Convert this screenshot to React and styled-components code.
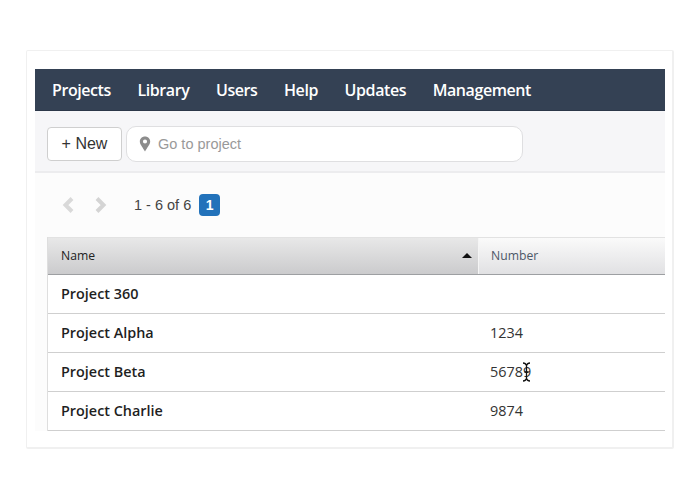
import React from "react";
import styled, { createGlobalStyle } from "styled-components";

const Global = createGlobalStyle`
  html, body { margin: 0; padding: 0; background: #fff; }
  body { width: 700px; height: 500px; overflow: hidden; font-family: "Open Sans", sans-serif; }
`;
const Page = styled.div`
  width: 700px; height: 500px; box-sizing: border-box; padding: 50px 26px 0;
`;
const Card = styled.div`
  width: 648px; height: 399px; box-sizing: border-box;
  border: 1px solid #f0f0f0; border-right-width: 2px; border-bottom-width: 2px; border-radius: 2px;
  padding: 18px 8px 0 8px; background: #fff;
`;
const Frame = styled.div`
  width: 630px; height: 362px; overflow: hidden; background: #fcfcfc;
`;
const Nav = styled.nav`
  height: 42px; box-sizing: border-box; background: #344154; border-bottom: 1px solid #2c3849;
  display: flex; align-items: center; padding: 0 0 0 17px; gap: 26.6px;
`;
const NavItem = styled.a`
  color: #fff; font: 600 16px/20px "Open Sans", sans-serif; letter-spacing: -0.42px;
`;
const Toolbar = styled.div`
  height: 62px; box-sizing: border-box; background: #f6f6f8; border-bottom: 2px solid #ececee;
  display: flex; align-items: flex-start; padding: 16px 0 0 12px; gap: 4px;
`;
const NewButton = styled.button`
  width: 75px; height: 34px; box-sizing: border-box; background: #fff; border: 1px solid #cfcfcf;
  border-radius: 4px; padding: 0; color: #333; font: 400 16px "Liberation Sans", Arial, sans-serif;
`;
const Search = styled.div`
  width: 397px; height: 36px; box-sizing: border-box; margin-top: -1px; background: #fff;
  border: 1px solid #dfdfe1; border-radius: 10px; display: flex; align-items: center;
  padding-left: 12px; gap: 7px; color: #999; font: 400 14.5px "Liberation Sans", Arial, sans-serif;
`;
const Pager = styled.div`
  height: 64px; display: flex; align-items: center; padding: 0 0 0 26px; color: #444;
  font: 400 14.5px "Liberation Sans", Arial, sans-serif;
`;
const Arrows = styled.div`
  display: flex; gap: 19px; margin-right: 26px;
`;
const Count = styled.span`
  margin-right: 8px;
`;
const PageBadge = styled.span`
  width: 21px; height: 22px; border-radius: 4px; background: #2272ba; color: #fff;
  display: flex; align-items: center; justify-content: center;
  font: 700 14px "Liberation Sans", Arial, sans-serif;
`;
const Table = styled.div`
  margin-left: 12px; width: 700px; border-left: 1px solid #dedede;
`;
const HeadRow = styled.div`
  display: grid; grid-template-columns: 430px 1fr; height: 38px; box-sizing: border-box;
  border-top: 1px solid #e2e2e2; border-bottom: 1px solid #9d9fa2;
`;
const HeadCell = styled.div`
  display: flex; align-items: center; justify-content: space-between;
  padding: 0 6px 1px ${p => (p.$active ? "13px" : "12px")};
  font: 400 12.2px "Open Sans", sans-serif;
  color: ${p => (p.$active ? "#222" : "#4d5868")};
  background: ${p => p.$active
    ? "linear-gradient(#e8e8e8, #cbcbcd)"
    : "linear-gradient(#fafafa, #e1e1e3)"};
  border-left: ${p => (p.$active ? "none" : "1px solid #f5f5f5")};
`;
const Row = styled.div`
  display: grid; grid-template-columns: 430px 1fr; height: 39px; box-sizing: border-box;
  background: #fff; border-bottom: 1px solid #cfcfcf; align-items: center;
`;
const NameCell = styled.div`
  padding: 0 0 2px 13px; font: 600 14.4px "Open Sans", sans-serif; color: #1f1f1f;
`;
const NumberCell = styled.div`
  position: relative; padding: 0 0 2px 12px; font: 400 14.4px "Open Sans", sans-serif; color: #333;
`;
const Cursor = styled.svg`
  position: absolute; left: 44px; top: 0;
`;

const rows = [
  ["Project 360", ""],
  ["Project Alpha", "1234"],
  ["Project Beta", "56789"],
  ["Project Charlie", "9874"],
];
const nav = ["Projects", "Library", "Users", "Help", "Updates", "Management"];

export default function App() {
  return (
    <Page>
      <Global />
      <Card>
        <Frame>
          <Nav>{nav.map(n => <NavItem key={n}>{n}</NavItem>)}</Nav>
          <Toolbar>
            <NewButton>+ New</NewButton>
            <Search>
              <svg width="12" height="16" viewBox="0 0 12 17">
                <path fillRule="evenodd" fill="#8c8c8c" d="M6 0.500C2.800 0.500 0.500 2.900 0.500 5.900 0.500 9.200 4 12.800 6 16.500 8 12.800 11.500 9.200 11.500 5.900 11.500 2.900 9.200 0.500 6 0.500ZM6 3.700A2.200 2.200 0 1 1 6 8.100 2.200 2.200 0 1 1 6 3.700Z" />
              </svg>
              Go to project
            </Search>
          </Toolbar>
          <Pager>
            <Arrows>
              <svg width="14" height="18" viewBox="0 0 14 18"><path d="M11 2.500L4.500 9l6.500 6.500" fill="none" stroke="#d9d9d9" strokeWidth="4" /></svg>
              <svg width="14" height="18" viewBox="0 0 14 18"><path d="M3 2.500L9.500 9 3 15.500" fill="none" stroke="#d4d4d4" strokeWidth="4" /></svg>
            </Arrows>
            <Count>1 - 6 of 6</Count>
            <PageBadge>1</PageBadge>
          </Pager>
          <Table>
            <HeadRow>
              <HeadCell $active>
                Name
                <svg width="10" height="5" viewBox="0 0 10 5"><path d="M5 0l5 5H0z" fill="#111" /></svg>
              </HeadCell>
              <HeadCell>Number</HeadCell>
            </HeadRow>
            {rows.map(([name, num]) => (
              <Row key={name}>
                <NameCell>{name}</NameCell>
                <NumberCell>
                  {num}
                  {num === "56789" && (
                    <Cursor width="9" height="20" viewBox="0 0 9 20">
                      <path d="M1 1c2 0 3 1 3.500 2.500C5 2 6 1 8 1M1 19c2 0 3-1 3.500-2.500C5 18 6 19 8 19M4.500 3v14M2.500 10h4" fill="none" stroke="#111" strokeWidth="1.300" />
                    </Cursor>
                  )}
                </NumberCell>
              </Row>
            ))}
          </Table>
        </Frame>
      </Card>
    </Page>
  );
}
